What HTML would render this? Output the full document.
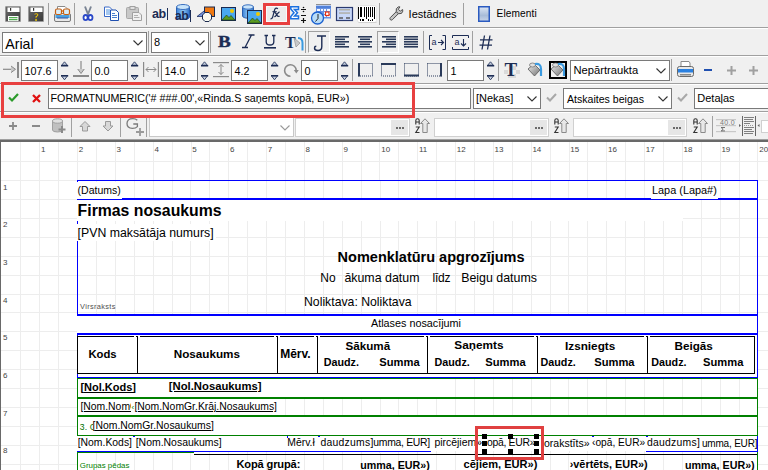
<!DOCTYPE html>
<html><head><meta charset="utf-8"><style>
html,body{margin:0;padding:0;width:768px;height:470px;overflow:hidden;background:#f0f0f0;position:relative}
.t{position:absolute;white-space:pre;line-height:1;}
.r{position:absolute;}
svg.r{overflow:visible}
</style></head><body>
<div class="r" style="left:0px;top:27px;width:768px;height:1px;background:#a0a0a0"></div><div class="r" style="left:0px;top:28px;width:768px;height:1px;background:#fff"></div><div class="r" style="left:0px;top:55px;width:768px;height:1px;background:#a0a0a0"></div><div class="r" style="left:0px;top:56px;width:768px;height:1px;background:#fff"></div><div class="r" style="left:0px;top:83px;width:768px;height:1px;background:#a0a0a0"></div><div class="r" style="left:0px;top:84px;width:768px;height:1px;background:#fff"></div><div class="r" style="left:0px;top:111px;width:768px;height:1px;background:#a0a0a0"></div><div class="r" style="left:0px;top:112px;width:768px;height:1px;background:#fff"></div><div class="r" style="left:0px;top:139px;width:768px;height:1px;background:#a0a0a0"></div><svg class="r" style="left:5px;top:6px;" width="16" height="16" viewBox="0 0 16 16"><defs><linearGradient id="fl" x1="0" y1="0" x2="1" y2="1"><stop offset="0" stop-color="#6a6a6a"/><stop offset="1" stop-color="#3a3a3a"/></linearGradient></defs><rect x="0.5" y="0.5" width="15" height="15" rx="0.5" fill="url(#fl)" stroke="#9a9a9a"/><rect x="2.5" y="1.5" width="12" height="4.5" fill="#fff"/><rect x="5" y="2" width="1.2" height="2.8" fill="#333"/><rect x="3" y="10" width="10.5" height="5" fill="#fff"/><rect x="4" y="11.2" width="8.5" height="1" fill="#2a9a2a"/><rect x="4" y="13.2" width="8.5" height="1" fill="#2a9a2a"/></svg><svg class="r" style="left:28px;top:6px;" width="16" height="16" viewBox="0 0 16 16"><rect x="0.5" y="0.5" width="15" height="15" rx="0.5" fill="url(#fl)" stroke="#9a9a9a"/><rect x="2.5" y="1.5" width="12" height="4.5" fill="#fff"/><rect x="5" y="2" width="1.2" height="2.8" fill="#333"/><path d="M6 8.8 Q6 7 8.2 7 Q10.5 7 10.5 8.8 Q10.5 10.2 8.8 11 L8.8 12.3 L7.3 12.3 L7.3 10.2 Q9 9.6 9 8.9 Q9 8.3 8.2 8.3 Q7.4 8.3 7.4 9 Z" fill="#f5d000" stroke="#2a2a60" stroke-width="0.4"/><rect x="7.2" y="13.2" width="1.7" height="1.6" fill="#f5d000"/></svg><div class="r" style="left:48px;top:3px;width:1px;height:22px;background:#a0a0a0"></div><svg class="r" style="left:54px;top:6px;" width="17" height="16" viewBox="0 0 17 16"><path d="M3.5 0.5 H11 L13 2.5 V8 H3.5 Z" fill="#fff" stroke="#8a8a8a"/><rect x="0.5" y="7.5" width="16" height="8" rx="1.5" fill="#e8e8e8" stroke="#7a7a7a"/><rect x="1.5" y="9" width="14" height="3" fill="#4aa0e0"/><rect x="3" y="11.5" width="11" height="1" fill="#3050a0"/><rect x="1.5" y="3" width="6" height="5.5" rx="1.5" fill="#d8ecf8" stroke="#c86010" stroke-width="1.2"/><rect x="9.5" y="3" width="6" height="5.5" rx="1.5" fill="#d8ecf8" stroke="#c86010" stroke-width="1.2"/><path d="M7.5 5 H9.5" stroke="#c86010" stroke-width="1.2"/></svg><div class="r" style="left:74px;top:3px;width:1px;height:22px;background:#a0a0a0"></div><svg class="r" style="left:83px;top:6px;" width="10" height="15" viewBox="0 0 10 15"><path d="M2 0.5 L5.3 9 M8 0.5 L4.7 9" stroke="#7a8494" stroke-width="1.9" fill="none"/><ellipse cx="2.6" cy="11.6" rx="2.1" ry="2.6" fill="#fff" stroke="#2a48c8" stroke-width="1.8"/><ellipse cx="7.4" cy="11.6" rx="2.1" ry="2.6" fill="#fff" stroke="#2a48c8" stroke-width="1.8"/></svg><svg class="r" style="left:103px;top:6px;" width="17" height="15" viewBox="0 0 17 15"><path d="M1.5 1 H6.5 L9 3.5 V10.5 H1.5 Z" fill="#fff" stroke="#3a6ac8"/><path d="M3 4 H7 M3 6 H7.5 M3 8 H7.5" stroke="#4a90e0"/><path d="M7.5 4 H13 L15.5 6.5 V14.5 H7.5 Z" fill="#fff" stroke="#2050b0"/><path d="M9 7.5 H12 M9 9.5 H14 M9 11.5 H14" stroke="#4a80d0"/></svg><svg class="r" style="left:126px;top:6px;" width="17" height="15" viewBox="0 0 17 15"><rect x="0.5" y="1.5" width="12" height="11" rx="1" fill="#c8c8c8" stroke="#a8a8a8"/><rect x="4" y="0.5" width="5" height="3" fill="#e0e0e0" stroke="#a0a0a0"/><path d="M6.5 6.5 H13 L15.5 9 V14.5 H6.5 Z" fill="#f0f0f0" stroke="#a0a0a0"/><path d="M8 9.5 H12 M8 11.5 H13.5" stroke="#b0b0b0"/></svg><div class="r" style="left:146px;top:3px;width:1px;height:22px;background:#a0a0a0"></div><div class="t" style="left:152.00px;top:8.02px;font-size:12.5px;font-weight:700;color:#1c2c54;font-family:'Liberation Sans',sans-serif;letter-spacing:-0.5px">ab</div><div class="r" style="left:167px;top:8px;width:1px;height:12px;background:#1c2c54"></div><svg class="r" style="left:176px;top:4px;" width="14" height="16" viewBox="0 0 14 16"><defs><linearGradient id="cyl" x1="0" y1="0" x2="1" y2="0"><stop offset="0" stop-color="#3a80d8"/><stop offset="0.5" stop-color="#90c8f4"/><stop offset="1" stop-color="#3070c8"/></linearGradient></defs><path d="M0.5 3 V13 A6.5 2.5 0 0 0 13.5 13 V3 Z" fill="url(#cyl)" stroke="#2a60b0"/><ellipse cx="7" cy="3" rx="6.5" ry="2.5" fill="#c8e4fa" stroke="#3a70c0"/></svg><div class="t" style="left:174.80px;top:10.42px;font-size:12.5px;font-weight:700;color:#1c2c54;font-family:'Liberation Sans',sans-serif;letter-spacing:-0.5px">ab</div><div class="r" style="left:190px;top:10px;width:1px;height:12px;background:#1c2c54"></div><svg class="r" style="left:196px;top:6px;" width="20" height="16" viewBox="0 0 20 16"><path d="M1 10.5 L10 10.5 L10 3.5 Z" fill="#7898e0" stroke="#203060" stroke-width="0.8"/><rect x="8.5" y="1" width="10" height="9.5" fill="#f07810" stroke="#1a2a50" stroke-width="1"/><path d="M9 6.5 H13 L15.5 9 V13 L13 15.5 H9 L6.5 13 V9 Z" fill="#fafaf0" stroke="#1a2a50" stroke-width="1"/></svg><svg class="r" style="left:221px;top:7px;" width="15" height="14" viewBox="0 0 15 14"><rect x="0.5" y="0.5" width="14" height="13" fill="#4aa8f0" stroke="#1a2a50"/><circle cx="11" cy="4" r="2" fill="#f0c800"/><path d="M1 13 L5.5 8 L8 10.5 L10 8.5 L14 13 Z" fill="#5a9a20" stroke="#1a3a10" stroke-width="0.6"/></svg><svg class="r" style="left:242px;top:4px;" width="12" height="15" viewBox="0 0 12 15"><path d="M0.5 3 V12 A5.5 2.2 0 0 0 11.5 12 V3 Z" fill="url(#cyl)" stroke="#2a60b0"/><ellipse cx="6" cy="3" rx="5.5" ry="2.2" fill="#c8e4fa" stroke="#3a70c0"/></svg><svg class="r" style="left:247px;top:10px;" width="15" height="14" viewBox="0 0 15 14"><rect x="0.5" y="0.5" width="14" height="13" fill="#4aa8f0" stroke="#1a2a50"/><circle cx="11" cy="4" r="2" fill="#f0c800"/><path d="M1 13 L5.5 8 L8 10.5 L10 8.5 L14 13 Z" fill="#5a9a20" stroke="#1a3a10" stroke-width="0.6"/></svg><div class="r" style="left:263px;top:3px;width:27px;height:22px;border:3px solid #e84040;box-sizing:border-box"></div><div class="r" style="left:266px;top:6px;width:21px;height:16px;border:1px solid #fafafa;box-sizing:border-box;background:#ececec"></div><svg class="r" style="left:268px;top:7px;" width="13" height="13" viewBox="0 0 13 13"><path d="M9.8 1.9 Q8.8 0.7 7.6 1.3 Q6.8 1.8 6.4 3.6 L4.6 10.3 Q4.1 11.9 2.4 12" fill="none" stroke="#1c2c54" stroke-width="1.25"/><path d="M4.4 4.7 H8.8" stroke="#1c2c54" stroke-width="1"/><path d="M6.2 5.5 Q6.9 5.1 7.5 5.9 L9.4 8.9 Q9.9 9.7 11.6 9.3 M11.6 5.2 Q10.9 5.1 10.2 5.9 L7.8 8.9 Q7.2 9.7 6.3 9.5" fill="none" stroke="#1c2c54" stroke-width="1.25"/></svg><svg class="r" style="left:290px;top:6px;" width="18" height="17" viewBox="0 0 18 17"><path d="M0.8 0.8 H8.5 V3.5 H4.5 L7.5 6.8 L4.5 10 H8.5 V12.8 H0.8 V10.5 L4 6.8 L0.8 3 Z" fill="#fff" stroke="#1a70e0" stroke-width="1.5"/><path d="M11 3.5 H16 M11 9.5 H16 M13.5 12 V17 M11 14.5 H16" stroke="#111" stroke-width="1.2"/><circle cx="13.5" cy="1.5" r="0.8" fill="#111"/><circle cx="13.5" cy="5.5" r="0.8" fill="#111"/></svg><svg class="r" style="left:311px;top:3px;" width="21" height="22" viewBox="0 0 21 22"><rect x="5" y="1" width="15" height="2" fill="#fff"/><path d="M5.5 1.5 H20" stroke="#222" stroke-dasharray="1,1" stroke-width="1"/><rect x="5" y="2.5" width="15" height="13" fill="#6a94e4"/><rect x="5" y="3" width="15" height="2" fill="#5080d8"/><g fill="#f4f8ff"><rect x="6" y="6" width="3" height="2"/><rect x="10" y="6" width="2" height="2"/><rect x="13" y="6" width="2" height="2"/><rect x="16" y="6" width="3" height="2"/><rect x="13" y="9" width="2" height="2"/><rect x="16" y="9" width="3" height="2"/><rect x="13" y="12" width="2" height="2"/><rect x="16" y="12" width="3" height="2"/></g><rect x="14.5" y="9" width="3.5" height="3.5" fill="#fff" stroke="#e83010" stroke-width="1.2"/><circle cx="6.5" cy="15" r="6" fill="#b8dcf8" stroke="#1a60d0" stroke-width="1.3"/><path d="M7 11 V15.5 L4.5 18.5" stroke="#111" stroke-width="0.9" fill="none"/></svg><svg class="r" style="left:336px;top:7px;" width="17" height="14" viewBox="0 0 17 14"><rect x="0.5" y="0.5" width="16" height="13" fill="#c8d8f8" stroke="#2a3a70" stroke-width="1.2"/><rect x="3" y="2" width="11" height="1.5" fill="#b0b0a8"/><rect x="3" y="5.3" width="11" height="1.5" fill="#b0b0a8"/><rect x="3" y="10.3" width="4" height="1.4" fill="#505050"/><rect x="10" y="10.3" width="4" height="1.4" fill="#505050"/></svg><svg class="r" style="left:357px;top:5px;" width="20" height="18" viewBox="0 0 20 18"><rect x="0.5" y="0.5" width="19" height="17" rx="2" fill="#fff" stroke="#e4e4e4"/><rect x="1.5" y="17" width="18" height="1" fill="#d0d0d0"/><g fill="#000"><rect x="1" y="2" width="1" height="12"/><rect x="3" y="2" width="2" height="10"/><rect x="7" y="2" width="1" height="10"/><rect x="9" y="2" width="1" height="12"/><rect x="11" y="2" width="1" height="10"/><rect x="13" y="2" width="1" height="10"/><rect x="15" y="2" width="1" height="10"/><rect x="17" y="2" width="1" height="12"/><rect x="3" y="14" width="1" height="2"/><rect x="5" y="14" width="2" height="2"/><rect x="11" y="14" width="1" height="2"/><rect x="13" y="15" width="1" height="1"/><rect x="15" y="14" width="1" height="2"/></g></svg><div class="r" style="left:379px;top:3px;width:1px;height:22px;background:#a0a0a0"></div><svg class="r" style="left:389px;top:6px;" width="15" height="15" viewBox="0 0 15 15"><path d="M1.3 11.6 L7.3 5.6 L9.4 7.7 L3.4 13.7 Q2.3 14.6 1.3 13.7 Q0.4 12.7 1.3 11.6 Z" fill="#c4c4c4" stroke="#505050" stroke-width="1"/><path d="M7.3 5.6 Q6.4 2.2 9.2 0.9 L11 0.9 L9.3 3.2 L11.3 5.2 L13.6 3.5 L13.8 5.2 Q13.3 8.4 9.4 7.7 Z" fill="#c4c4c4" stroke="#505050" stroke-width="1"/></svg><div class="t" style="left:408.60px;top:8.53px;font-size:11.07px;font-weight:400;color:#000;font-family:'Liberation Sans',sans-serif;">Iestādnes</div><div class="r" style="left:463px;top:3px;width:1px;height:22px;background:#a0a0a0"></div><svg class="r" style="left:478px;top:6px;" width="12" height="16" viewBox="0 0 12 16"><defs><linearGradient id="el" x1="0" y1="0" x2="0" y2="1"><stop offset="0" stop-color="#dce6f4"/><stop offset="0.6" stop-color="#a8bcd8"/><stop offset="1" stop-color="#c8d4e8"/></linearGradient></defs><rect x="0.75" y="0.75" width="10.5" height="14.5" fill="url(#el)" stroke="#2a5ac0" stroke-width="1.5"/></svg><div class="t" style="left:496.60px;top:9.32px;font-size:10.13px;font-weight:400;color:#000;font-family:'Liberation Sans',sans-serif;letter-spacing:0.1px">Elementi</div><div class="r" style="left:2px;top:32px;width:145px;height:21px;background:#fff;border:1px solid #7a7a7a;box-sizing:border-box"></div><div class="t" style="left:5.20px;top:36.58px;font-size:14.2px;font-weight:400;color:#000;font-family:'Liberation Sans',sans-serif;">Arial</div><svg class="r" style="left:133px;top:40px;" width="10" height="6" viewBox="0 0 10 6"><path d="M0.5 0.5 L5 5 L9.5 0.5" fill="none" stroke="#333" stroke-width="1.1"/></svg><div class="r" style="left:148px;top:31px;width:1px;height:22px;background:#a0a0a0"></div><div class="r" style="left:151px;top:32px;width:58px;height:21px;background:#fff;border:1px solid #7a7a7a;box-sizing:border-box"></div><div class="t" style="left:154.00px;top:37.09px;font-size:11px;font-weight:400;color:#000;font-family:'Liberation Sans',sans-serif;">8</div><svg class="r" style="left:195px;top:40px;" width="10" height="6" viewBox="0 0 10 6"><path d="M0.5 0.5 L5 5 L9.5 0.5" fill="none" stroke="#333" stroke-width="1.1"/></svg><div class="r" style="left:210px;top:31px;width:1px;height:22px;background:#a0a0a0"></div><div class="t" style="left:217.50px;top:33.41px;font-size:17px;font-weight:700;color:#1c2c54;font-family:'Liberation Serif',sans-serif;transform:scaleX(1.12);transform-origin:0 0;-webkit-text-stroke:0.4px #1c2c54">B</div><svg class="r" style="left:241px;top:34px;" width="15" height="15" viewBox="0 0 15 15"><path d="M7.5 1 H13.5 M1 13.5 H7 M10.5 1 L4 13.5" fill="none" stroke="#1c2c54" stroke-width="1.3"/></svg><svg class="r" style="left:263px;top:35px;" width="14" height="14" viewBox="0 0 14 14"><path d="M1.5 0.5 H5 M9 0.5 H12.5 M3.2 0.5 V7 Q3.2 10 7 10 Q10.8 10 10.8 7 V0.5" fill="none" stroke="#1c2c54" stroke-width="1.3"/><rect x="1" y="12" width="12" height="1.6" fill="#1c2c54"/></svg><div class="t" style="left:285.00px;top:34.95px;font-size:16px;font-weight:700;color:#1c2c54;font-family:'Liberation Serif',sans-serif;">T</div><svg class="r" style="left:293px;top:37px;" width="11" height="14" viewBox="0 0 11 14"><path d="M1 1 L7 6 L3 10 Z" fill="#c8c8c8" stroke="#888" stroke-width="0.6"/><path d="M5 1 Q9.5 1 9.5 6 V13.5" fill="none" stroke="#3a9ae0" stroke-width="2"/></svg><div class="r" style="left:305px;top:31px;width:1px;height:22px;background:#a0a0a0"></div><div class="r" style="left:308px;top:31px;width:22px;height:22px;border-top:1px solid #a0a0a0;border-left:1px solid #a0a0a0;border-right:1px solid #fff;border-bottom:1px solid #fff;box-sizing:border-box;background:#f0f0f0"></div><svg class="r" style="left:313px;top:35px;" width="14" height="17" viewBox="0 0 14 17"><path d="M4 1 H13 M8.8 1 V11.5 Q8.8 15.5 5 15.5 Q1.5 15.5 1.5 13 Q1.5 11.3 3.3 11.3" fill="none" stroke="#1c2c54" stroke-width="1.4"/></svg><svg class="r" style="left:335px;top:36px;" width="14" height="12" viewBox="0 0 14 12"><rect x="0" y="0" width="14" height="1.6" fill="#2a3a5a"/><rect x="0" y="2.5" width="10" height="1.6" fill="#2a3a5a"/><rect x="0" y="5" width="14" height="1.6" fill="#2a3a5a"/><rect x="0" y="7.5" width="10" height="1.6" fill="#2a3a5a"/><rect x="0" y="10" width="14" height="1.6" fill="#2a3a5a"/></svg><svg class="r" style="left:358px;top:36px;" width="14" height="12" viewBox="0 0 14 12"><rect x="0.0" y="0" width="14" height="1.6" fill="#2a3a5a"/><rect x="2.0" y="2.5" width="10" height="1.6" fill="#2a3a5a"/><rect x="0.0" y="5" width="14" height="1.6" fill="#2a3a5a"/><rect x="2.0" y="7.5" width="10" height="1.6" fill="#2a3a5a"/><rect x="0.0" y="10" width="14" height="1.6" fill="#2a3a5a"/></svg><div class="r" style="left:377px;top:31px;width:22px;height:22px;border-top:1px solid #a0a0a0;border-left:1px solid #a0a0a0;border-right:1px solid #fff;border-bottom:1px solid #fff;box-sizing:border-box;background:#f0f0f0"></div><svg class="r" style="left:382px;top:36px;" width="14" height="12" viewBox="0 0 14 12"><rect x="0" y="0" width="14" height="1.6" fill="#2a3a5a"/><rect x="4" y="2.5" width="10" height="1.6" fill="#2a3a5a"/><rect x="0" y="5" width="14" height="1.6" fill="#2a3a5a"/><rect x="4" y="7.5" width="10" height="1.6" fill="#2a3a5a"/><rect x="0" y="10" width="14" height="1.6" fill="#2a3a5a"/></svg><svg class="r" style="left:404px;top:36px;" width="14" height="12" viewBox="0 0 14 12"><rect x="0" y="0" width="14" height="1.6" fill="#2a3a5a"/><rect x="0" y="2.5" width="14" height="1.6" fill="#2a3a5a"/><rect x="0" y="5" width="14" height="1.6" fill="#2a3a5a"/><rect x="0" y="7.5" width="14" height="1.6" fill="#2a3a5a"/><rect x="0" y="10" width="14" height="1.6" fill="#2a3a5a"/></svg><div class="r" style="left:423px;top:31px;width:1px;height:22px;background:#a0a0a0"></div><svg class="r" style="left:429px;top:35px;" width="17" height="15" viewBox="0 0 17 15"><path d="M3 0.5 H0.5 V14.5 H3 M13.5 0.5 H16.5 V14.5 H13.5" fill="none" stroke="#1c2c54" stroke-width="1"/><path d="M9 7.5 H14 M12 5 L14.5 7.5 L12 10" fill="none" stroke="#1c2c54" stroke-width="1.1"/></svg><div class="t" style="left:431.50px;top:37.88px;font-size:9px;font-weight:400;color:#1c2c54;font-family:'Liberation Sans',sans-serif;">a</div><svg class="r" style="left:452px;top:35px;" width="17" height="15" viewBox="0 0 17 15"><path d="M0.5 3 V0.5 H16.5 V3 M0.5 12 V14.5 H16.5 V12" fill="none" stroke="#1c2c54" stroke-width="1"/><path d="M11.5 4 V11 M9 8.5 L11.5 11 L14 8.5" fill="none" stroke="#1c2c54" stroke-width="1.1"/></svg><div class="t" style="left:454.50px;top:37.88px;font-size:9px;font-weight:400;color:#1c2c54;font-family:'Liberation Sans',sans-serif;">a</div><div class="r" style="left:472px;top:31px;width:1px;height:22px;background:#a0a0a0"></div><svg class="r" style="left:479px;top:35px;" width="14" height="15" viewBox="0 0 14 15"><path d="M5.5 0.5 L3 14.5 M11 0.5 L8.5 14.5 M1 4.8 H13.5 M0.5 10.2 H13" fill="none" stroke="#1c2c54" stroke-width="1.3"/></svg><svg class="r" style="left:3px;top:61px;" width="17" height="17" viewBox="0 0 17 17"><path d="M0 8.3 H11" stroke="#8a8a8a" stroke-width="1.2"/><path d="M8 5 L12.5 8.3 L8 11.6" fill="#c8c8c8" stroke="#8a8a8a" stroke-width="1"/><rect x="14" y="1" width="2" height="16" fill="#8a8a8a"/></svg><div class="r" style="left:21px;top:60px;width:37px;height:21px;background:#fff;border:1px solid #7a7a7a;box-sizing:border-box"></div><div class="t" style="left:24.50px;top:65.56px;font-size:10.8px;font-weight:400;color:#000;font-family:'Liberation Sans',sans-serif;">107.6</div><svg class="r" style="left:61px;top:61px;" width="8" height="6" viewBox="0 0 8 6"><path d="M3.5 0.8 L6.3 4.2 H0.7 Z" fill="#c8d0e0" stroke="#2a3a60" stroke-width="0.9"/><rect x="0" y="4" width="7.2" height="1.5" fill="#1c2c54"/></svg><svg class="r" style="left:61px;top:75px;" width="8" height="6" viewBox="0 0 8 6"><rect x="0" y="0" width="7.2" height="1.5" fill="#1c2c54"/><path d="M0.7 1.2 H6.3 L3.5 4.8 Z" fill="#c8d0e0" stroke="#2a3a60" stroke-width="0.9"/></svg><svg class="r" style="left:73px;top:61px;" width="16" height="17" viewBox="0 0 16 17"><path d="M8 0 V11" stroke="#8a8a8a" stroke-width="1.2"/><path d="M4.7 8 L8 12.5 L11.3 8" fill="#c8c8c8" stroke="#8a8a8a" stroke-width="1"/><rect x="0" y="14" width="16" height="2" fill="#8a8a8a"/></svg><div class="r" style="left:91px;top:60px;width:37px;height:21px;background:#fff;border:1px solid #7a7a7a;box-sizing:border-box"></div><div class="t" style="left:94.50px;top:65.56px;font-size:10.8px;font-weight:400;color:#000;font-family:'Liberation Sans',sans-serif;">0.0</div><svg class="r" style="left:131px;top:61px;" width="8" height="6" viewBox="0 0 8 6"><path d="M3.5 0.8 L6.3 4.2 H0.7 Z" fill="#c8d0e0" stroke="#2a3a60" stroke-width="0.9"/><rect x="0" y="4" width="7.2" height="1.5" fill="#1c2c54"/></svg><svg class="r" style="left:131px;top:75px;" width="8" height="6" viewBox="0 0 8 6"><rect x="0" y="0" width="7.2" height="1.5" fill="#1c2c54"/><path d="M0.7 1.2 H6.3 L3.5 4.8 Z" fill="#c8d0e0" stroke="#2a3a60" stroke-width="0.9"/></svg><svg class="r" style="left:143px;top:61px;" width="16" height="17" viewBox="0 0 16 17"><rect x="0" y="1" width="1.2" height="15" fill="#8a8a8a"/><rect x="14.8" y="1" width="1.2" height="15" fill="#8a8a8a"/><path d="M3 8.5 H13 M5.5 6 L3 8.5 L5.5 11 M10.5 6 L13 8.5 L10.5 11" fill="none" stroke="#8a8a8a" stroke-width="1"/></svg><div class="r" style="left:161px;top:60px;width:37px;height:21px;background:#fff;border:1px solid #7a7a7a;box-sizing:border-box"></div><div class="t" style="left:164.50px;top:65.56px;font-size:10.8px;font-weight:400;color:#000;font-family:'Liberation Sans',sans-serif;">14.0</div><svg class="r" style="left:201px;top:61px;" width="8" height="6" viewBox="0 0 8 6"><path d="M3.5 0.8 L6.3 4.2 H0.7 Z" fill="#c8d0e0" stroke="#2a3a60" stroke-width="0.9"/><rect x="0" y="4" width="7.2" height="1.5" fill="#1c2c54"/></svg><svg class="r" style="left:201px;top:75px;" width="8" height="6" viewBox="0 0 8 6"><rect x="0" y="0" width="7.2" height="1.5" fill="#1c2c54"/><path d="M0.7 1.2 H6.3 L3.5 4.8 Z" fill="#c8d0e0" stroke="#2a3a60" stroke-width="0.9"/></svg><svg class="r" style="left:213px;top:61px;" width="16" height="17" viewBox="0 0 16 17"><rect x="0" y="1" width="16" height="1.2" fill="#8a8a8a"/><rect x="0" y="15" width="16" height="1.2" fill="#8a8a8a"/><path d="M8 3.5 V13.5 M5.5 6 L8 3.5 L10.5 6 M5.5 11 L8 13.5 L10.5 11" fill="none" stroke="#8a8a8a" stroke-width="1"/></svg><div class="r" style="left:231px;top:60px;width:37px;height:21px;background:#fff;border:1px solid #7a7a7a;box-sizing:border-box"></div><div class="t" style="left:234.50px;top:65.56px;font-size:10.8px;font-weight:400;color:#000;font-family:'Liberation Sans',sans-serif;">4.2</div><svg class="r" style="left:271px;top:61px;" width="8" height="6" viewBox="0 0 8 6"><path d="M3.5 0.8 L6.3 4.2 H0.7 Z" fill="#c8d0e0" stroke="#2a3a60" stroke-width="0.9"/><rect x="0" y="4" width="7.2" height="1.5" fill="#1c2c54"/></svg><svg class="r" style="left:271px;top:75px;" width="8" height="6" viewBox="0 0 8 6"><rect x="0" y="0" width="7.2" height="1.5" fill="#1c2c54"/><path d="M0.7 1.2 H6.3 L3.5 4.8 Z" fill="#c8d0e0" stroke="#2a3a60" stroke-width="0.9"/></svg><svg class="r" style="left:283px;top:62px;" width="16" height="16" viewBox="0 0 16 16"><path d="M7.5 14.3 A5.8 5.8 0 1 1 13.2 8.3" fill="none" stroke="#8a8a8a" stroke-width="1.6"/><path d="M10.8 8 H15.8 L13.3 11.5 Z" fill="#8a8a8a"/></svg><div class="r" style="left:301px;top:60px;width:37px;height:21px;background:#fff;border:1px solid #7a7a7a;box-sizing:border-box"></div><div class="t" style="left:304.50px;top:65.56px;font-size:10.8px;font-weight:400;color:#000;font-family:'Liberation Sans',sans-serif;">0</div><svg class="r" style="left:341px;top:61px;" width="8" height="6" viewBox="0 0 8 6"><path d="M3.5 0.8 L6.3 4.2 H0.7 Z" fill="#c8d0e0" stroke="#2a3a60" stroke-width="0.9"/><rect x="0" y="4" width="7.2" height="1.5" fill="#1c2c54"/></svg><svg class="r" style="left:341px;top:75px;" width="8" height="6" viewBox="0 0 8 6"><rect x="0" y="0" width="7.2" height="1.5" fill="#1c2c54"/><path d="M0.7 1.2 H6.3 L3.5 4.8 Z" fill="#c8d0e0" stroke="#2a3a60" stroke-width="0.9"/></svg><div class="r" style="left:352px;top:59px;width:1px;height:22px;background:#a0a0a0"></div><svg class="r" style="left:358px;top:63px;" width="15" height="14" viewBox="0 0 15 14"><rect x="0.5" y="0.5" width="14" height="12.5" fill="none" stroke="#2a3a5a" stroke-width="1" stroke-dasharray="1,1"/><rect x="0" y="0" width="2" height="13.5" fill="#2a3a5a"/></svg><svg class="r" style="left:381px;top:63px;" width="15" height="14" viewBox="0 0 15 14"><rect x="0.5" y="0.5" width="14" height="12.5" fill="none" stroke="#2a3a5a" stroke-width="1" stroke-dasharray="1,1"/><rect x="0" y="0" width="15" height="2" fill="#2a3a5a"/></svg><svg class="r" style="left:404px;top:63px;" width="15" height="14" viewBox="0 0 15 14"><rect x="0.5" y="0.5" width="14" height="12.5" fill="none" stroke="#2a3a5a" stroke-width="1" stroke-dasharray="1,1"/><rect x="0" y="11.5" width="15" height="2" fill="#2a3a5a"/></svg><svg class="r" style="left:427px;top:63px;" width="15" height="14" viewBox="0 0 15 14"><rect x="0.5" y="0.5" width="14" height="12.5" fill="none" stroke="#2a3a5a" stroke-width="1" stroke-dasharray="1,1"/><rect x="13" y="0" width="2" height="13.5" fill="#2a3a5a"/></svg><div class="r" style="left:447px;top:60px;width:37px;height:21px;background:#fff;border:1px solid #7a7a7a;box-sizing:border-box"></div><div class="t" style="left:450.50px;top:65.56px;font-size:10.8px;font-weight:400;color:#000;font-family:'Liberation Sans',sans-serif;">1</div><svg class="r" style="left:487px;top:61px;" width="8" height="6" viewBox="0 0 8 6"><path d="M3.5 0.8 L6.3 4.2 H0.7 Z" fill="#c8d0e0" stroke="#2a3a60" stroke-width="0.9"/><rect x="0" y="4" width="7.2" height="1.5" fill="#1c2c54"/></svg><svg class="r" style="left:487px;top:75px;" width="8" height="6" viewBox="0 0 8 6"><rect x="0" y="0" width="7.2" height="1.5" fill="#1c2c54"/><path d="M0.7 1.2 H6.3 L3.5 4.8 Z" fill="#c8d0e0" stroke="#2a3a60" stroke-width="0.9"/></svg><div class="r" style="left:498px;top:59px;width:1px;height:22px;background:#a0a0a0"></div><svg class="r" style="left:504px;top:62px;" width="16" height="16" viewBox="0 0 16 16"><g fill="#dadada"><rect x="0" y="8" width="4" height="4"/><rect x="4" y="12" width="4" height="4"/><rect x="12" y="8" width="4" height="4"/><rect x="8" y="12" width="4" height="4"/><rect x="8" y="4" width="4" height="4"/></g></svg><div class="t" style="left:504.50px;top:60.41px;font-size:19px;font-weight:700;color:#1c2c54;font-family:'Liberation Serif',sans-serif;">T</div><svg class="r" style="left:527px;top:61px;" width="17" height="17" viewBox="0 0 17 17"><defs><linearGradient id="bk527" x1="0" y1="0" x2="1" y2="1"><stop offset="0" stop-color="#f0f0f0"/><stop offset="1" stop-color="#707070"/></linearGradient></defs><path d="M1 8 L7 3 L13 9 L7.5 15 Z" fill="url(#bk527)" stroke="#555" stroke-width="0.8"/><ellipse cx="5.5" cy="4" rx="3" ry="2" fill="#e0e0e0" stroke="#666" stroke-width="0.7"/><path d="M8 3 Q14 2 14 8 V15" fill="none" stroke="#3a9ae0" stroke-width="2.2"/></svg><div class="r" style="left:549px;top:61px;width:18px;height:18px;border:2px solid #000;box-sizing:border-box"></div><svg class="r" style="left:550px;top:61px;" width="17" height="17" viewBox="0 0 17 17"><defs><linearGradient id="bk550" x1="0" y1="0" x2="1" y2="1"><stop offset="0" stop-color="#f0f0f0"/><stop offset="1" stop-color="#707070"/></linearGradient></defs><path d="M1 8 L7 3 L13 9 L7.5 15 Z" fill="url(#bk550)" stroke="#555" stroke-width="0.8"/><ellipse cx="5.5" cy="4" rx="3" ry="2" fill="#e0e0e0" stroke="#666" stroke-width="0.7"/><path d="M8 3 Q14 2 14 8 V15" fill="none" stroke="#3a9ae0" stroke-width="2.2"/></svg><div class="r" style="left:570px;top:60px;width:100px;height:21px;background:#fff;border:1px solid #7a7a7a;box-sizing:border-box"></div><div class="t" style="left:573.50px;top:65.32px;font-size:11.2px;font-weight:400;color:#000;font-family:'Liberation Sans',sans-serif;">Nepārtraukta</div><svg class="r" style="left:656px;top:68px;" width="10" height="6" viewBox="0 0 10 6"><path d="M0.5 0.5 L5 5 L9.5 0.5" fill="none" stroke="#333" stroke-width="1.1"/></svg><div class="r" style="left:671px;top:59px;width:1px;height:22px;background:#a0a0a0"></div><svg class="r" style="left:677px;top:61px;" width="17" height="17" viewBox="0 0 17 17"><path d="M4 0.5 H12 L13 2 V6 H4 Z" fill="#fff" stroke="#8a8a8a"/><rect x="0.5" y="5.5" width="16" height="10" rx="2" fill="#e8e8e8" stroke="#6a6a6a"/><rect x="1" y="8" width="15" height="3.5" fill="#2a80e0"/><rect x="3" y="13" width="11" height="1.5" fill="#8a8a8a"/></svg><div class="r" style="left:704px;top:69px;width:8px;height:2px;background:#2050b0"></div><svg class="r" style="left:727px;top:66px;" width="9" height="9" viewBox="0 0 9 9"><path d="M4.5 0 V9 M0 4.5 H9" stroke="#a0a0a0" stroke-width="2"/></svg><svg class="r" style="left:749px;top:66px;" width="9" height="9" viewBox="0 0 9 9"><path d="M4.5 0 V9 M0 4.5 H9" stroke="#a0a0a0" stroke-width="2"/></svg><svg class="r" style="left:8px;top:93px;" width="11" height="9" viewBox="0 0 11 9"><path d="M1 4.5 L4 7.5 L10 1" fill="none" stroke="#2a9a2a" stroke-width="2.2"/></svg><svg class="r" style="left:32px;top:94px;" width="9" height="9" viewBox="0 0 9 9"><path d="M1 1 L8 8 M8 1 L1 8" fill="none" stroke="#e01010" stroke-width="2.3"/></svg><div class="r" style="left:48px;top:88px;width:423px;height:21px;background:#fff;border:1px solid #7a7a7a;box-sizing:border-box"></div><div class="t" style="left:50.50px;top:93.21px;font-size:10.73px;font-weight:400;color:#000;font-family:'Liberation Sans',sans-serif;">FORMATNUMERIC('# ###.00',«Rinda.S saņemts kopā, EUR»)</div><div class="r" style="left:473px;top:88px;width:68px;height:21px;background:#fff;border:1px solid #7a7a7a;box-sizing:border-box"></div><div class="t" style="left:476.00px;top:93.19px;font-size:11px;font-weight:400;color:#000;font-family:'Liberation Sans',sans-serif;">[Nekas]</div><svg class="r" style="left:527px;top:96px;" width="10" height="6" viewBox="0 0 10 6"><path d="M0.5 0.5 L5 5 L9.5 0.5" fill="none" stroke="#333" stroke-width="1.1"/></svg><svg class="r" style="left:546px;top:93px;" width="11" height="9" viewBox="0 0 11 9"><path d="M1 4.5 L4 7.5 L10 1" fill="none" stroke="#a8a8a8" stroke-width="2"/></svg><div class="r" style="left:563px;top:88px;width:109px;height:21px;background:#fff;border:1px solid #7a7a7a;box-sizing:border-box"></div><div class="t" style="left:567.00px;top:93.55px;font-size:10.57px;font-weight:400;color:#000;font-family:'Liberation Sans',sans-serif;">Atskaites beigas</div><svg class="r" style="left:658px;top:96px;" width="10" height="6" viewBox="0 0 10 6"><path d="M0.5 0.5 L5 5 L9.5 0.5" fill="none" stroke="#333" stroke-width="1.1"/></svg><svg class="r" style="left:677px;top:93px;" width="11" height="9" viewBox="0 0 11 9"><path d="M1 4.5 L4 7.5 L10 1" fill="none" stroke="#a8a8a8" stroke-width="2"/></svg><div class="r" style="left:694px;top:88px;width:86px;height:21px;background:#fff;border:1px solid #7a7a7a;box-sizing:border-box"></div><div class="t" style="left:697.30px;top:93.19px;font-size:11px;font-weight:400;color:#000;font-family:'Liberation Sans',sans-serif;">Detaļas</div><svg class="r" style="left:9px;top:122px;" width="8" height="8" viewBox="0 0 8 8"><path d="M4 0 V8 M0 4 H8" stroke="#8a8a8a" stroke-width="1.8"/></svg><div class="r" style="left:32px;top:125px;width:8px;height:2px;background:#8a8a8a"></div><svg class="r" style="left:52px;top:118px;" width="15" height="16" viewBox="0 0 15 16"><path d="M0.5 3 V12 A5 2 0 0 0 10.5 12 V3 Z" fill="#c0c0c0" stroke="#a0a0a0"/><ellipse cx="5.5" cy="3" rx="5" ry="2.2" fill="#e0e0e0" stroke="#a0a0a0"/><path d="M10 8 V15 M6.5 11.5 H13.5" stroke="#8a8a8a" stroke-width="2"/></svg><div class="r" style="left:71px;top:118px;width:1px;height:19px;background:#a0a0a0"></div><svg class="r" style="left:80px;top:121px;" width="11" height="11" viewBox="0 0 11 11"><path d="M5 0.5 L10 5.5 H7.5 V10 H2.5 V5.5 H0 Z" fill="#d8d8d8" stroke="#9a9a9a" stroke-width="1"/></svg><svg class="r" style="left:103px;top:121px;" width="11" height="11" viewBox="0 0 11 11"><path d="M5 10 L10 5 H7.5 V0.5 H2.5 V5 H0 Z" fill="#d8d8d8" stroke="#9a9a9a" stroke-width="1"/></svg><div class="r" style="left:120px;top:118px;width:1px;height:19px;background:#a0a0a0"></div><svg class="r" style="left:126px;top:118px;" width="13" height="12" viewBox="0 0 13 12"><path d="M11.3 2.2 Q9.8 0.7 6.8 0.7 Q1 0.7 1 5.6 Q1 10.4 6.4 10.4 Q9.8 10.4 11.4 8.6 V6 H7.3" fill="none" stroke="#7a7a7a" stroke-width="1.3"/></svg><svg class="r" style="left:136px;top:128px;" width="8" height="8" viewBox="0 0 8 8"><path d="M4 0 V8 M0 4 H8" stroke="#9a9a9a" stroke-width="1.8"/></svg><div class="r" style="left:146px;top:118px;width:1px;height:19px;background:#a0a0a0"></div><div class="r" style="left:149px;top:117px;width:145px;height:20px;background:#fff;border:1px solid #c8c8c8;box-sizing:border-box"></div><svg class="r" style="left:280px;top:125px;" width="10" height="6" viewBox="0 0 10 6"><path d="M0.5 0.5 L5 5 L9.5 0.5" fill="none" stroke="#999" stroke-width="1.1"/></svg><div class="r" style="left:295px;top:118px;width:115px;height:19px;background:#fff;border:1px solid #d0d0d0;box-sizing:border-box"></div><div class="r" style="left:391px;top:120px;width:17px;height:15px;background:#e6e6e6"></div><div class="r" style="left:396px;top:127px;width:2px;height:2px;background:#6a6a6a"></div><div class="r" style="left:399px;top:127px;width:2px;height:2px;background:#6a6a6a"></div><div class="r" style="left:402px;top:127px;width:2px;height:2px;background:#6a6a6a"></div><svg class="r" style="left:415px;top:118px;" width="16" height="16" viewBox="0 0 16 16"><path d="M0.8 6.5 V2.5 Q0.8 0.8 2.5 0.8 Q4.2 0.8 4.2 2.5 V6.5 M0.8 4 H4.2 M0.8 9 H4.2 L0.8 14.5 H4.5" fill="none" stroke="#333" stroke-width="1.1"/><path d="M10 0.8 L14.5 5.5 H12.2 V14.5 H7.8 V5.5 H5.5 Z" fill="#e8e8e8" stroke="#8a8a8a" stroke-width="1"/></svg><div class="r" style="left:434px;top:118px;width:115px;height:19px;background:#fff;border:1px solid #d0d0d0;box-sizing:border-box"></div><div class="r" style="left:530px;top:120px;width:17px;height:15px;background:#e6e6e6"></div><div class="r" style="left:535px;top:127px;width:2px;height:2px;background:#6a6a6a"></div><div class="r" style="left:538px;top:127px;width:2px;height:2px;background:#6a6a6a"></div><div class="r" style="left:541px;top:127px;width:2px;height:2px;background:#6a6a6a"></div><svg class="r" style="left:554px;top:118px;" width="16" height="16" viewBox="0 0 16 16"><path d="M0.8 6.5 V2.5 Q0.8 0.8 2.5 0.8 Q4.2 0.8 4.2 2.5 V6.5 M0.8 4 H4.2 M0.8 9 H4.2 L0.8 14.5 H4.5" fill="none" stroke="#333" stroke-width="1.1"/><path d="M10 0.8 L14.5 5.5 H12.2 V14.5 H7.8 V5.5 H5.5 Z" fill="#e8e8e8" stroke="#8a8a8a" stroke-width="1"/></svg><div class="r" style="left:573px;top:118px;width:114px;height:19px;background:#fff;border:1px solid #d0d0d0;box-sizing:border-box"></div><div class="r" style="left:668px;top:120px;width:17px;height:15px;background:#e6e6e6"></div><div class="r" style="left:673px;top:127px;width:2px;height:2px;background:#6a6a6a"></div><div class="r" style="left:676px;top:127px;width:2px;height:2px;background:#6a6a6a"></div><div class="r" style="left:679px;top:127px;width:2px;height:2px;background:#6a6a6a"></div><svg class="r" style="left:693px;top:118px;" width="16" height="16" viewBox="0 0 16 16"><path d="M0.8 6.5 V2.5 Q0.8 0.8 2.5 0.8 Q4.2 0.8 4.2 2.5 V6.5 M0.8 4 H4.2 M0.8 9 H4.2 L0.8 14.5 H4.5" fill="none" stroke="#333" stroke-width="1.1"/><path d="M10 0.8 L14.5 5.5 H12.2 V14.5 H7.8 V5.5 H5.5 Z" fill="#e8e8e8" stroke="#8a8a8a" stroke-width="1"/></svg><div class="r" style="left:712px;top:116px;width:1px;height:21px;background:#a0a0a0"></div><svg class="r" style="left:716px;top:118px;" width="20" height="16" viewBox="0 0 20 16"><rect x="0" y="1" width="20" height="1.2" fill="#c8c8c8"/><rect x="0" y="7" width="20" height="1.2" fill="#c8c8c8"/><rect x="0" y="13" width="20" height="1.2" fill="#c8c8c8"/><path d="M5 9.5 H9 M5.3 9.8 L7.2 11.3 L5.3 12.8 M5 12.9 H9" fill="none" stroke="#555" stroke-width="0.8"/></svg><div class="t" style="left:720.00px;top:118.57px;font-size:7px;font-weight:400;color:#777;font-family:'Liberation Sans',sans-serif;letter-spacing:0.3px">40.0</div><svg class="r" style="left:739px;top:116px;" width="21" height="21" viewBox="0 0 21 21"><rect x="3" y="0" width="1" height="20" fill="#666"/><rect x="16" y="0" width="1" height="20" fill="#666"/><g fill="#808080"><rect x="5" y="1" width="10" height="1"/><rect x="5" y="3" width="9" height="1"/><rect x="5" y="5" width="10" height="1"/><rect x="5" y="7" width="6" height="1"/><rect x="5" y="11" width="10" height="1"/><rect x="5" y="13" width="8" height="1"/><rect x="5" y="15" width="10" height="1"/><rect x="5" y="17" width="9" height="1"/></g><g fill="#999"><rect x="5" y="9" width="1" height="1"/><rect x="7" y="9" width="1" height="1"/><rect x="9" y="9" width="1" height="1"/><rect x="11" y="9" width="1" height="1"/><rect x="13" y="9" width="1" height="1"/></g><path d="M0 8 L2 9.5 L0 11 Z M20.5 8 L18.5 9.5 L20.5 11 Z" fill="#666"/></svg><div class="r" style="left:761px;top:120px;width:19px;height:13px;background:#fff;border:1px solid #d0d0d0;box-sizing:border-box"></div><div class="r" style="left:1px;top:82px;width:414px;height:36px;border:3px solid #e84040;box-sizing:border-box"></div><div class="r" style="left:0px;top:140px;width:768px;height:2px;background:#696969"></div><div class="r" style="left:0px;top:142px;width:1px;height:328px;background:#696969"></div><div class="r" style="left:1px;top:142px;width:767px;height:328px;background:#fff"></div><svg class="r" style="left:1px;top:142px;" width="767" height="328" viewBox="0 0 767 328"><rect x="19" y="0" width="1" height="328" fill="#ededed"/><rect x="38" y="0" width="1" height="328" fill="#ededed"/><rect x="57" y="0" width="1" height="328" fill="#ededed"/><rect x="76" y="0" width="1" height="328" fill="#ededed"/><rect x="95" y="0" width="1" height="328" fill="#ededed"/><rect x="114" y="0" width="1" height="328" fill="#ededed"/><rect x="133" y="0" width="1" height="328" fill="#ededed"/><rect x="152" y="0" width="1" height="328" fill="#ededed"/><rect x="171" y="0" width="1" height="328" fill="#ededed"/><rect x="190" y="0" width="1" height="328" fill="#ededed"/><rect x="208" y="0" width="1" height="328" fill="#ededed"/><rect x="227" y="0" width="1" height="328" fill="#ededed"/><rect x="246" y="0" width="1" height="328" fill="#ededed"/><rect x="265" y="0" width="1" height="328" fill="#ededed"/><rect x="284" y="0" width="1" height="328" fill="#ededed"/><rect x="303" y="0" width="1" height="328" fill="#ededed"/><rect x="322" y="0" width="1" height="328" fill="#ededed"/><rect x="341" y="0" width="1" height="328" fill="#ededed"/><rect x="360" y="0" width="1" height="328" fill="#ededed"/><rect x="378" y="0" width="1" height="328" fill="#ededed"/><rect x="397" y="0" width="1" height="328" fill="#ededed"/><rect x="416" y="0" width="1" height="328" fill="#ededed"/><rect x="435" y="0" width="1" height="328" fill="#ededed"/><rect x="454" y="0" width="1" height="328" fill="#ededed"/><rect x="473" y="0" width="1" height="328" fill="#ededed"/><rect x="492" y="0" width="1" height="328" fill="#ededed"/><rect x="511" y="0" width="1" height="328" fill="#ededed"/><rect x="530" y="0" width="1" height="328" fill="#ededed"/><rect x="549" y="0" width="1" height="328" fill="#ededed"/><rect x="568" y="0" width="1" height="328" fill="#ededed"/><rect x="586" y="0" width="1" height="328" fill="#ededed"/><rect x="605" y="0" width="1" height="328" fill="#ededed"/><rect x="624" y="0" width="1" height="328" fill="#ededed"/><rect x="643" y="0" width="1" height="328" fill="#ededed"/><rect x="662" y="0" width="1" height="328" fill="#ededed"/><rect x="681" y="0" width="1" height="328" fill="#ededed"/><rect x="700" y="0" width="1" height="328" fill="#ededed"/><rect x="719" y="0" width="1" height="328" fill="#ededed"/><rect x="738" y="0" width="1" height="328" fill="#ededed"/><rect x="756" y="0" width="1" height="328" fill="#ededed"/><rect x="0" y="19" width="767" height="1" fill="#ededed"/><rect x="0" y="38" width="767" height="1" fill="#ededed"/><rect x="0" y="57" width="767" height="1" fill="#ededed"/><rect x="0" y="76" width="767" height="1" fill="#ededed"/><rect x="0" y="95" width="767" height="1" fill="#ededed"/><rect x="0" y="114" width="767" height="1" fill="#ededed"/><rect x="0" y="133" width="767" height="1" fill="#ededed"/><rect x="0" y="152" width="767" height="1" fill="#ededed"/><rect x="0" y="170" width="767" height="1" fill="#ededed"/><rect x="0" y="189" width="767" height="1" fill="#ededed"/><rect x="0" y="208" width="767" height="1" fill="#ededed"/><rect x="0" y="227" width="767" height="1" fill="#ededed"/><rect x="0" y="246" width="767" height="1" fill="#ededed"/><rect x="0" y="265" width="767" height="1" fill="#ededed"/><rect x="0" y="284" width="767" height="1" fill="#ededed"/><rect x="0" y="303" width="767" height="1" fill="#ededed"/><rect x="0" y="322" width="767" height="1" fill="#ededed"/></svg><div class="t" style="left:41.00px;top:145.53px;font-size:8px;font-weight:400;color:#444;font-family:'Liberation Sans',sans-serif;">1</div><div class="t" style="left:78.80px;top:145.53px;font-size:8px;font-weight:400;color:#444;font-family:'Liberation Sans',sans-serif;">2</div><div class="t" style="left:116.60px;top:145.53px;font-size:8px;font-weight:400;color:#444;font-family:'Liberation Sans',sans-serif;">3</div><div class="t" style="left:154.40px;top:145.53px;font-size:8px;font-weight:400;color:#444;font-family:'Liberation Sans',sans-serif;">4</div><div class="t" style="left:192.20px;top:145.53px;font-size:8px;font-weight:400;color:#444;font-family:'Liberation Sans',sans-serif;">5</div><div class="t" style="left:230.00px;top:145.53px;font-size:8px;font-weight:400;color:#444;font-family:'Liberation Sans',sans-serif;">6</div><div class="t" style="left:267.80px;top:145.53px;font-size:8px;font-weight:400;color:#444;font-family:'Liberation Sans',sans-serif;">7</div><div class="t" style="left:305.60px;top:145.53px;font-size:8px;font-weight:400;color:#444;font-family:'Liberation Sans',sans-serif;">8</div><div class="t" style="left:343.40px;top:145.53px;font-size:8px;font-weight:400;color:#444;font-family:'Liberation Sans',sans-serif;">9</div><div class="t" style="left:381.20px;top:145.53px;font-size:8px;font-weight:400;color:#444;font-family:'Liberation Sans',sans-serif;">10</div><div class="t" style="left:419.00px;top:145.53px;font-size:8px;font-weight:400;color:#444;font-family:'Liberation Sans',sans-serif;">11</div><div class="t" style="left:456.80px;top:145.53px;font-size:8px;font-weight:400;color:#444;font-family:'Liberation Sans',sans-serif;">12</div><div class="t" style="left:494.60px;top:145.53px;font-size:8px;font-weight:400;color:#444;font-family:'Liberation Sans',sans-serif;">13</div><div class="t" style="left:532.40px;top:145.53px;font-size:8px;font-weight:400;color:#444;font-family:'Liberation Sans',sans-serif;">14</div><div class="t" style="left:570.20px;top:145.53px;font-size:8px;font-weight:400;color:#444;font-family:'Liberation Sans',sans-serif;">15</div><div class="t" style="left:608.00px;top:145.53px;font-size:8px;font-weight:400;color:#444;font-family:'Liberation Sans',sans-serif;">16</div><div class="t" style="left:645.80px;top:145.53px;font-size:8px;font-weight:400;color:#444;font-family:'Liberation Sans',sans-serif;">17</div><div class="t" style="left:683.60px;top:145.53px;font-size:8px;font-weight:400;color:#444;font-family:'Liberation Sans',sans-serif;">18</div><div class="t" style="left:721.40px;top:145.53px;font-size:8px;font-weight:400;color:#444;font-family:'Liberation Sans',sans-serif;">19</div><div class="t" style="left:759.20px;top:145.53px;font-size:8px;font-weight:400;color:#444;font-family:'Liberation Sans',sans-serif;">20</div><div class="t" style="left:3.00px;top:183.73px;font-size:8px;font-weight:400;color:#444;font-family:'Liberation Sans',sans-serif;">1</div><div class="t" style="left:3.00px;top:221.40px;font-size:8px;font-weight:400;color:#444;font-family:'Liberation Sans',sans-serif;">2</div><div class="t" style="left:3.00px;top:259.07px;font-size:8px;font-weight:400;color:#444;font-family:'Liberation Sans',sans-serif;">3</div><div class="t" style="left:3.00px;top:296.74px;font-size:8px;font-weight:400;color:#444;font-family:'Liberation Sans',sans-serif;">4</div><div class="t" style="left:3.00px;top:334.41px;font-size:8px;font-weight:400;color:#444;font-family:'Liberation Sans',sans-serif;">5</div><div class="t" style="left:3.00px;top:372.08px;font-size:8px;font-weight:400;color:#444;font-family:'Liberation Sans',sans-serif;">6</div><div class="t" style="left:3.00px;top:409.75px;font-size:8px;font-weight:400;color:#444;font-family:'Liberation Sans',sans-serif;">7</div><div class="t" style="left:3.00px;top:447.42px;font-size:8px;font-weight:400;color:#444;font-family:'Liberation Sans',sans-serif;">8</div><div class="r" style="left:78px;top:181px;width:679px;height:17px;background:#fff"></div><svg class="r" style="left:78px;top:181px;" width="679" height="17" viewBox="0 0 679 17"><rect x="18" y="0" width="1" height="17" fill="#ededed"/><rect x="37" y="0" width="1" height="17" fill="#ededed"/><rect x="56" y="0" width="1" height="17" fill="#ededed"/><rect x="75" y="0" width="1" height="17" fill="#ededed"/><rect x="94" y="0" width="1" height="17" fill="#ededed"/><rect x="112" y="0" width="1" height="17" fill="#ededed"/><rect x="131" y="0" width="1" height="17" fill="#ededed"/><rect x="150" y="0" width="1" height="17" fill="#ededed"/><rect x="169" y="0" width="1" height="17" fill="#ededed"/><rect x="188" y="0" width="1" height="17" fill="#ededed"/><rect x="207" y="0" width="1" height="17" fill="#ededed"/><rect x="226" y="0" width="1" height="17" fill="#ededed"/><rect x="245" y="0" width="1" height="17" fill="#ededed"/><rect x="264" y="0" width="1" height="17" fill="#ededed"/><rect x="283" y="0" width="1" height="17" fill="#ededed"/><rect x="302" y="0" width="1" height="17" fill="#ededed"/><rect x="320" y="0" width="1" height="17" fill="#ededed"/><rect x="339" y="0" width="1" height="17" fill="#ededed"/><rect x="358" y="0" width="1" height="17" fill="#ededed"/><rect x="377" y="0" width="1" height="17" fill="#ededed"/><rect x="396" y="0" width="1" height="17" fill="#ededed"/><rect x="415" y="0" width="1" height="17" fill="#ededed"/><rect x="434" y="0" width="1" height="17" fill="#ededed"/><rect x="453" y="0" width="1" height="17" fill="#ededed"/><rect x="472" y="0" width="1" height="17" fill="#ededed"/><rect x="490" y="0" width="1" height="17" fill="#ededed"/><rect x="509" y="0" width="1" height="17" fill="#ededed"/><rect x="528" y="0" width="1" height="17" fill="#ededed"/><rect x="547" y="0" width="1" height="17" fill="#ededed"/><rect x="566" y="0" width="1" height="17" fill="#ededed"/><rect x="585" y="0" width="1" height="17" fill="#ededed"/><rect x="604" y="0" width="1" height="17" fill="#ededed"/><rect x="623" y="0" width="1" height="17" fill="#ededed"/><rect x="642" y="0" width="1" height="17" fill="#ededed"/><rect x="661" y="0" width="1" height="17" fill="#ededed"/></svg><div class="r" style="left:77px;top:180px;width:681px;height:19px;border:1px solid #0000ff;box-sizing:border-box"></div><div class="r" style="left:77px;top:182px;width:45px;height:17px;background:#fff"></div><div class="t" style="left:77.60px;top:184.61px;font-size:10.5px;font-weight:400;color:#000;font-family:'Liberation Sans',sans-serif;">(Datums)</div><div class="r" style="left:651px;top:182px;width:67px;height:17px;background:#fff"></div><div class="t" style="left:652.00px;top:184.57px;font-size:10.9px;font-weight:400;color:#000;font-family:'Liberation Sans',sans-serif;">Lapa (Lapa#)</div><div class="r" style="left:78px;top:200px;width:679px;height:114px;background:#fff"></div><svg class="r" style="left:78px;top:200px;" width="679" height="114" viewBox="0 0 679 114"><rect x="18" y="0" width="1" height="114" fill="#ededed"/><rect x="37" y="0" width="1" height="114" fill="#ededed"/><rect x="56" y="0" width="1" height="114" fill="#ededed"/><rect x="75" y="0" width="1" height="114" fill="#ededed"/><rect x="94" y="0" width="1" height="114" fill="#ededed"/><rect x="112" y="0" width="1" height="114" fill="#ededed"/><rect x="131" y="0" width="1" height="114" fill="#ededed"/><rect x="150" y="0" width="1" height="114" fill="#ededed"/><rect x="169" y="0" width="1" height="114" fill="#ededed"/><rect x="188" y="0" width="1" height="114" fill="#ededed"/><rect x="207" y="0" width="1" height="114" fill="#ededed"/><rect x="226" y="0" width="1" height="114" fill="#ededed"/><rect x="245" y="0" width="1" height="114" fill="#ededed"/><rect x="264" y="0" width="1" height="114" fill="#ededed"/><rect x="283" y="0" width="1" height="114" fill="#ededed"/><rect x="302" y="0" width="1" height="114" fill="#ededed"/><rect x="320" y="0" width="1" height="114" fill="#ededed"/><rect x="339" y="0" width="1" height="114" fill="#ededed"/><rect x="358" y="0" width="1" height="114" fill="#ededed"/><rect x="377" y="0" width="1" height="114" fill="#ededed"/><rect x="396" y="0" width="1" height="114" fill="#ededed"/><rect x="415" y="0" width="1" height="114" fill="#ededed"/><rect x="434" y="0" width="1" height="114" fill="#ededed"/><rect x="453" y="0" width="1" height="114" fill="#ededed"/><rect x="472" y="0" width="1" height="114" fill="#ededed"/><rect x="490" y="0" width="1" height="114" fill="#ededed"/><rect x="509" y="0" width="1" height="114" fill="#ededed"/><rect x="528" y="0" width="1" height="114" fill="#ededed"/><rect x="547" y="0" width="1" height="114" fill="#ededed"/><rect x="566" y="0" width="1" height="114" fill="#ededed"/><rect x="585" y="0" width="1" height="114" fill="#ededed"/><rect x="604" y="0" width="1" height="114" fill="#ededed"/><rect x="623" y="0" width="1" height="114" fill="#ededed"/><rect x="642" y="0" width="1" height="114" fill="#ededed"/><rect x="661" y="0" width="1" height="114" fill="#ededed"/><rect x="0" y="18" width="679" height="1" fill="#ededed"/><rect x="0" y="37" width="679" height="1" fill="#ededed"/><rect x="0" y="56" width="679" height="1" fill="#ededed"/><rect x="0" y="75" width="679" height="1" fill="#ededed"/><rect x="0" y="94" width="679" height="1" fill="#ededed"/><rect x="0" y="112" width="679" height="1" fill="#ededed"/></svg><div class="r" style="left:77px;top:199px;width:681px;height:116px;border:1px solid #0000ff;box-sizing:border-box"></div><div class="r" style="left:77px;top:200px;width:606px;height:21px;background:#fff"></div><div class="t" style="left:77.60px;top:202.72px;font-size:15.8px;font-weight:700;color:#000;font-family:'Liberation Sans',sans-serif;">Firmas nosaukums</div><div class="r" style="left:77px;top:224px;width:139px;height:17px;background:#fff"></div><div class="t" style="left:77.60px;top:226.89px;font-size:12.3px;font-weight:400;color:#000;font-family:'Liberation Sans',sans-serif;">[PVN maksātāja numurs]</div><div class="t" style="left:80.00px;top:302.73px;font-size:7.4px;font-weight:400;color:#505050;font-family:'Liberation Sans',sans-serif;letter-spacing:0.35px">Virsraksts</div><div class="t" style="left:337.60px;top:249.72px;font-size:14.5px;font-weight:700;color:#000;font-family:'Liberation Sans',sans-serif;">Nomenklatūru apgrozījums</div><div class="t" style="left:320.30px;top:271.84px;font-size:12px;font-weight:400;color:#000;font-family:'Liberation Sans',sans-serif;">No</div><div class="t" style="left:344.40px;top:271.50px;font-size:12.4px;font-weight:400;color:#000;font-family:'Liberation Sans',sans-serif;">ākuma datum</div><div class="t" style="left:432.50px;top:271.84px;font-size:12px;font-weight:400;color:#000;font-family:'Liberation Sans',sans-serif;letter-spacing:-0.2px">līdz</div><div class="t" style="left:461.20px;top:271.50px;font-size:12.4px;font-weight:400;color:#000;font-family:'Liberation Sans',sans-serif;">Beigu datums</div><div class="t" style="left:304.00px;top:295.62px;font-size:12.26px;font-weight:400;color:#000;font-family:'Liberation Sans',sans-serif;">Noliktava: Noliktava</div><div class="r" style="left:77px;top:315px;width:681px;height:19px;border:1px solid #0000ff;box-sizing:border-box"></div><div class="r" style="left:77px;top:316px;width:680px;height:17px;background:#fff"></div><div class="t" style="left:371.00px;top:317.56px;font-size:10.8px;font-weight:400;color:#000;font-family:'Liberation Sans',sans-serif;">Atlases nosacījumi</div><div class="r" style="left:77px;top:334px;width:681px;height:44px;border:1px solid #0000ff;box-sizing:border-box"></div><div class="r" style="left:78px;top:335px;width:679px;height:42px;background:#fff"></div><div class="r" style="left:77px;top:336px;width:678px;height:38px;border:1px solid #000;box-sizing:border-box"></div><div class="r" style="left:134px;top:336px;width:2px;height:1px;background:#fff"></div><div class="r" style="left:138px;top:336px;width:2px;height:1px;background:#fff"></div><div class="r" style="left:137px;top:336px;width:1px;height:38px;background:#000"></div><div class="r" style="left:274px;top:336px;width:2px;height:1px;background:#fff"></div><div class="r" style="left:278px;top:336px;width:2px;height:1px;background:#fff"></div><div class="r" style="left:277px;top:336px;width:1px;height:38px;background:#000"></div><div class="r" style="left:314px;top:336px;width:2px;height:1px;background:#fff"></div><div class="r" style="left:318px;top:336px;width:2px;height:1px;background:#fff"></div><div class="r" style="left:317px;top:336px;width:1px;height:38px;background:#000"></div><div class="r" style="left:424px;top:336px;width:2px;height:1px;background:#fff"></div><div class="r" style="left:428px;top:336px;width:2px;height:1px;background:#fff"></div><div class="r" style="left:427px;top:336px;width:1px;height:38px;background:#000"></div><div class="r" style="left:534px;top:336px;width:2px;height:1px;background:#fff"></div><div class="r" style="left:538px;top:336px;width:2px;height:1px;background:#fff"></div><div class="r" style="left:537px;top:336px;width:1px;height:38px;background:#000"></div><div class="r" style="left:644px;top:336px;width:2px;height:1px;background:#fff"></div><div class="r" style="left:648px;top:336px;width:2px;height:1px;background:#fff"></div><div class="r" style="left:647px;top:336px;width:1px;height:38px;background:#000"></div><div class="t" style="left:88.40px;top:348.63px;font-size:11.3px;font-weight:700;color:#000;font-family:'Liberation Sans',sans-serif;">Kods</div><div class="t" style="left:173.70px;top:348.29px;font-size:11.7px;font-weight:700;color:#000;font-family:'Liberation Sans',sans-serif;">Nosaukums</div><div class="t" style="left:280.20px;top:348.04px;font-size:12px;font-weight:700;color:#000;font-family:'Liberation Sans',sans-serif;">Mērv.</div><div class="t" style="left:345.50px;top:340.34px;font-size:11.65px;font-weight:700;color:#000;font-family:'Liberation Sans',sans-serif;">Sākumā</div><div class="t" style="left:323.70px;top:357.11px;font-size:10.74px;font-weight:700;color:#000;font-family:'Liberation Sans',sans-serif;">Daudz.</div><div class="t" style="left:379.30px;top:356.73px;font-size:11.18px;font-weight:700;color:#000;font-family:'Liberation Sans',sans-serif;">Summa</div><div class="t" style="left:454.30px;top:340.21px;font-size:11.8px;font-weight:700;color:#000;font-family:'Liberation Sans',sans-serif;">Saņemts</div><div class="t" style="left:434.60px;top:357.11px;font-size:10.74px;font-weight:700;color:#000;font-family:'Liberation Sans',sans-serif;">Daudz.</div><div class="t" style="left:485.30px;top:356.73px;font-size:11.18px;font-weight:700;color:#000;font-family:'Liberation Sans',sans-serif;">Summa</div><div class="t" style="left:565.00px;top:340.24px;font-size:11.76px;font-weight:700;color:#000;font-family:'Liberation Sans',sans-serif;">Izsniegts</div><div class="t" style="left:540.60px;top:357.11px;font-size:10.74px;font-weight:700;color:#000;font-family:'Liberation Sans',sans-serif;">Daudz.</div><div class="t" style="left:594.20px;top:356.73px;font-size:11.18px;font-weight:700;color:#000;font-family:'Liberation Sans',sans-serif;">Summa</div><div class="t" style="left:674.50px;top:340.31px;font-size:11.68px;font-weight:700;color:#000;font-family:'Liberation Sans',sans-serif;">Beigās</div><div class="t" style="left:651.30px;top:357.11px;font-size:10.74px;font-weight:700;color:#000;font-family:'Liberation Sans',sans-serif;">Daudz.</div><div class="t" style="left:703.00px;top:356.73px;font-size:11.18px;font-weight:700;color:#000;font-family:'Liberation Sans',sans-serif;">Summa</div><div class="r" style="left:78px;top:379px;width:679px;height:18px;background:#fff"></div><svg class="r" style="left:78px;top:379px;" width="679" height="18" viewBox="0 0 679 18"><rect x="18" y="0" width="1" height="18" fill="#ededed"/><rect x="37" y="0" width="1" height="18" fill="#ededed"/><rect x="56" y="0" width="1" height="18" fill="#ededed"/><rect x="75" y="0" width="1" height="18" fill="#ededed"/><rect x="94" y="0" width="1" height="18" fill="#ededed"/><rect x="112" y="0" width="1" height="18" fill="#ededed"/><rect x="131" y="0" width="1" height="18" fill="#ededed"/><rect x="150" y="0" width="1" height="18" fill="#ededed"/><rect x="169" y="0" width="1" height="18" fill="#ededed"/><rect x="188" y="0" width="1" height="18" fill="#ededed"/><rect x="207" y="0" width="1" height="18" fill="#ededed"/><rect x="226" y="0" width="1" height="18" fill="#ededed"/><rect x="245" y="0" width="1" height="18" fill="#ededed"/><rect x="264" y="0" width="1" height="18" fill="#ededed"/><rect x="283" y="0" width="1" height="18" fill="#ededed"/><rect x="302" y="0" width="1" height="18" fill="#ededed"/><rect x="320" y="0" width="1" height="18" fill="#ededed"/><rect x="339" y="0" width="1" height="18" fill="#ededed"/><rect x="358" y="0" width="1" height="18" fill="#ededed"/><rect x="377" y="0" width="1" height="18" fill="#ededed"/><rect x="396" y="0" width="1" height="18" fill="#ededed"/><rect x="415" y="0" width="1" height="18" fill="#ededed"/><rect x="434" y="0" width="1" height="18" fill="#ededed"/><rect x="453" y="0" width="1" height="18" fill="#ededed"/><rect x="472" y="0" width="1" height="18" fill="#ededed"/><rect x="490" y="0" width="1" height="18" fill="#ededed"/><rect x="509" y="0" width="1" height="18" fill="#ededed"/><rect x="528" y="0" width="1" height="18" fill="#ededed"/><rect x="547" y="0" width="1" height="18" fill="#ededed"/><rect x="566" y="0" width="1" height="18" fill="#ededed"/><rect x="585" y="0" width="1" height="18" fill="#ededed"/><rect x="604" y="0" width="1" height="18" fill="#ededed"/><rect x="623" y="0" width="1" height="18" fill="#ededed"/><rect x="642" y="0" width="1" height="18" fill="#ededed"/><rect x="661" y="0" width="1" height="18" fill="#ededed"/><rect x="0" y="18" width="679" height="1" fill="#ededed"/></svg><div class="r" style="left:77px;top:378px;width:681px;height:20px;border:1px solid #008000;box-sizing:border-box"></div><div class="r" style="left:78px;top:379px;width:377px;height:18px;background:#fff"></div><div class="t" style="left:80.40px;top:381.59px;font-size:11px;font-weight:700;color:#000;font-family:'Liberation Sans',sans-serif;text-decoration:underline">[Nol.Kods]</div><div class="t" style="left:168.80px;top:381.34px;font-size:11.29px;font-weight:700;color:#000;font-family:'Liberation Sans',sans-serif;text-decoration:underline">[Nol.Nosaukums]</div><div class="r" style="left:78px;top:399px;width:679px;height:16px;background:#fff"></div><svg class="r" style="left:78px;top:399px;" width="679" height="16" viewBox="0 0 679 16"><rect x="18" y="0" width="1" height="16" fill="#ededed"/><rect x="37" y="0" width="1" height="16" fill="#ededed"/><rect x="56" y="0" width="1" height="16" fill="#ededed"/><rect x="75" y="0" width="1" height="16" fill="#ededed"/><rect x="94" y="0" width="1" height="16" fill="#ededed"/><rect x="112" y="0" width="1" height="16" fill="#ededed"/><rect x="131" y="0" width="1" height="16" fill="#ededed"/><rect x="150" y="0" width="1" height="16" fill="#ededed"/><rect x="169" y="0" width="1" height="16" fill="#ededed"/><rect x="188" y="0" width="1" height="16" fill="#ededed"/><rect x="207" y="0" width="1" height="16" fill="#ededed"/><rect x="226" y="0" width="1" height="16" fill="#ededed"/><rect x="245" y="0" width="1" height="16" fill="#ededed"/><rect x="264" y="0" width="1" height="16" fill="#ededed"/><rect x="283" y="0" width="1" height="16" fill="#ededed"/><rect x="302" y="0" width="1" height="16" fill="#ededed"/><rect x="320" y="0" width="1" height="16" fill="#ededed"/><rect x="339" y="0" width="1" height="16" fill="#ededed"/><rect x="358" y="0" width="1" height="16" fill="#ededed"/><rect x="377" y="0" width="1" height="16" fill="#ededed"/><rect x="396" y="0" width="1" height="16" fill="#ededed"/><rect x="415" y="0" width="1" height="16" fill="#ededed"/><rect x="434" y="0" width="1" height="16" fill="#ededed"/><rect x="453" y="0" width="1" height="16" fill="#ededed"/><rect x="472" y="0" width="1" height="16" fill="#ededed"/><rect x="490" y="0" width="1" height="16" fill="#ededed"/><rect x="509" y="0" width="1" height="16" fill="#ededed"/><rect x="528" y="0" width="1" height="16" fill="#ededed"/><rect x="547" y="0" width="1" height="16" fill="#ededed"/><rect x="566" y="0" width="1" height="16" fill="#ededed"/><rect x="585" y="0" width="1" height="16" fill="#ededed"/><rect x="604" y="0" width="1" height="16" fill="#ededed"/><rect x="623" y="0" width="1" height="16" fill="#ededed"/><rect x="642" y="0" width="1" height="16" fill="#ededed"/><rect x="661" y="0" width="1" height="16" fill="#ededed"/></svg><div class="r" style="left:77px;top:398px;width:681px;height:18px;border:1px solid #008000;box-sizing:border-box"></div><div class="r" style="left:78px;top:399px;width:201px;height:16px;background:#fff"></div><div class="r" style="left:78px;top:399px;width:53px;height:16px;overflow:hidden"><div class="t" style="left:2.40px;top:3.19px;font-size:10.4px;font-weight:400;color:#000;font-family:'Liberation Sans',sans-serif;text-decoration:underline">[Nom.NomGr</div></div><div class="t" style="left:131.50px;top:404.23px;font-size:8px;font-weight:400;color:#008000;font-family:'Liberation Sans',sans-serif;">‹</div><div class="t" style="left:134.40px;top:402.19px;font-size:10.4px;font-weight:400;color:#000;font-family:'Liberation Sans',sans-serif;text-decoration:underline">[Nom.NomGr.Krāj.Nosaukums]</div><div class="r" style="left:77px;top:416px;width:681px;height:20px;border:1px solid #008000;box-sizing:border-box"></div><div class="r" style="left:78px;top:417px;width:679px;height:18px;background:#fff"></div><div class="t" style="left:79.80px;top:422.52px;font-size:8.6px;font-weight:400;color:#007000;font-family:'Liberation Sans',sans-serif;letter-spacing:0.1px">3. G</div><div class="r" style="left:93px;top:417px;width:123px;height:17px;background:#fff"></div><div class="t" style="left:92.60px;top:420.79px;font-size:10.4px;font-weight:400;color:#000;font-family:'Liberation Sans',sans-serif;text-decoration:underline">[Nom.NomGr.Nosaukums]</div><div class="r" style="left:77px;top:436px;width:680px;height:15px;background:#fff"></div><div class="r" style="left:77px;top:451px;width:354px;height:1px;background:#0000ff"></div><div class="r" style="left:646px;top:451px;width:112px;height:1px;background:#0000ff"></div><div class="r" style="left:757px;top:436px;width:1px;height:16px;background:#0000ff"></div><div class="r" style="left:646px;top:436px;width:2px;height:1px;background:#0000ff"></div><div class="r" style="left:287px;top:436px;width:1px;height:2px;background:#0000ff"></div><div class="r" style="left:318px;top:436px;width:2px;height:1px;background:#0000ff"></div><div class="r" style="left:133px;top:436px;width:2px;height:1px;background:#0000ff"></div><div class="r" style="left:592px;top:436px;width:2px;height:1px;background:#0000ff"></div><div class="t" style="left:77.70px;top:438.19px;font-size:10.4px;font-weight:400;color:#000;font-family:'Liberation Sans',sans-serif;">[Nom.Kods]</div><div class="t" style="left:135.70px;top:438.14px;font-size:10.46px;font-weight:400;color:#000;font-family:'Liberation Sans',sans-serif;">[Nom.Nosaukums]</div><div class="t" style="left:287.30px;top:438.19px;font-size:10.4px;font-weight:400;color:#000;font-family:'Liberation Sans',sans-serif;">Mērv.ł</div><div class="t" style="left:320.50px;top:438.19px;font-size:10.4px;font-weight:400;color:#000;font-family:'Liberation Sans',sans-serif;letter-spacing:0.25px">daudzums]</div><div class="t" style="left:373.30px;top:438.19px;font-size:10.4px;font-weight:400;color:#000;font-family:'Liberation Sans',sans-serif;letter-spacing:-0.3px">umma, EUR]</div><div class="t" style="left:434.40px;top:438.15px;font-size:10.45px;font-weight:400;color:#000;font-family:'Liberation Sans',sans-serif;">pircējiem»</div><div class="t" style="left:487.00px;top:438.19px;font-size:10.4px;font-weight:400;color:#000;font-family:'Liberation Sans',sans-serif;letter-spacing:-0.3px">opā, EUR»</div><div class="t" style="left:544.00px;top:438.11px;font-size:10.5px;font-weight:400;color:#000;font-family:'Liberation Sans',sans-serif;">orakstīts»</div><div class="t" style="left:592.00px;top:438.36px;font-size:10.2px;font-weight:400;color:#000;font-family:'Liberation Sans',sans-serif;">‹opā, EUR»</div><div class="t" style="left:647.00px;top:438.19px;font-size:10.4px;font-weight:400;color:#000;font-family:'Liberation Sans',sans-serif;letter-spacing:0.25px">daudzums]</div><div class="t" style="left:702.00px;top:438.53px;font-size:10.0px;font-weight:400;color:#000;font-family:'Liberation Sans',sans-serif;letter-spacing:-0.2px">umma, EUR]</div><div class="r" style="left:78px;top:453px;width:679px;height:27px;background:#fff"></div><svg class="r" style="left:78px;top:453px;" width="679" height="27" viewBox="0 0 679 27"><rect x="18" y="0" width="1" height="27" fill="#ededed"/><rect x="37" y="0" width="1" height="27" fill="#ededed"/><rect x="56" y="0" width="1" height="27" fill="#ededed"/><rect x="75" y="0" width="1" height="27" fill="#ededed"/><rect x="94" y="0" width="1" height="27" fill="#ededed"/><rect x="112" y="0" width="1" height="27" fill="#ededed"/><rect x="131" y="0" width="1" height="27" fill="#ededed"/><rect x="150" y="0" width="1" height="27" fill="#ededed"/><rect x="169" y="0" width="1" height="27" fill="#ededed"/><rect x="188" y="0" width="1" height="27" fill="#ededed"/><rect x="207" y="0" width="1" height="27" fill="#ededed"/><rect x="226" y="0" width="1" height="27" fill="#ededed"/><rect x="245" y="0" width="1" height="27" fill="#ededed"/><rect x="264" y="0" width="1" height="27" fill="#ededed"/><rect x="283" y="0" width="1" height="27" fill="#ededed"/><rect x="302" y="0" width="1" height="27" fill="#ededed"/><rect x="320" y="0" width="1" height="27" fill="#ededed"/><rect x="339" y="0" width="1" height="27" fill="#ededed"/><rect x="358" y="0" width="1" height="27" fill="#ededed"/><rect x="377" y="0" width="1" height="27" fill="#ededed"/><rect x="396" y="0" width="1" height="27" fill="#ededed"/><rect x="415" y="0" width="1" height="27" fill="#ededed"/><rect x="434" y="0" width="1" height="27" fill="#ededed"/><rect x="453" y="0" width="1" height="27" fill="#ededed"/><rect x="472" y="0" width="1" height="27" fill="#ededed"/><rect x="490" y="0" width="1" height="27" fill="#ededed"/><rect x="509" y="0" width="1" height="27" fill="#ededed"/><rect x="528" y="0" width="1" height="27" fill="#ededed"/><rect x="547" y="0" width="1" height="27" fill="#ededed"/><rect x="566" y="0" width="1" height="27" fill="#ededed"/><rect x="585" y="0" width="1" height="27" fill="#ededed"/><rect x="604" y="0" width="1" height="27" fill="#ededed"/><rect x="623" y="0" width="1" height="27" fill="#ededed"/><rect x="642" y="0" width="1" height="27" fill="#ededed"/><rect x="661" y="0" width="1" height="27" fill="#ededed"/><rect x="0" y="18" width="679" height="1" fill="#ededed"/></svg><div class="r" style="left:77px;top:452px;width:1px;height:18px;background:#008000"></div><div class="r" style="left:77px;top:452px;width:117px;height:1px;background:#008000"></div><div class="r" style="left:194px;top:454px;width:563px;height:1px;background:#000"></div><div class="t" style="left:79.80px;top:462.06px;font-size:7.9px;font-weight:400;color:#008000;font-family:'Liberation Sans',sans-serif;">Grupas pēdas</div><div class="t" style="left:236.50px;top:459.00px;font-size:11.1px;font-weight:700;color:#000;font-family:'Liberation Sans',sans-serif;letter-spacing:-0.15px">Kopā grupā:</div><div class="t" style="left:360.20px;top:459.52px;font-size:10.72px;font-weight:700;color:#000;font-family:'Liberation Sans',sans-serif;">umma, EUR»)</div><div class="t" style="left:463.50px;top:459.20px;font-size:11.1px;font-weight:700;color:#000;font-family:'Liberation Sans',sans-serif;">cējiem, EUR»)</div><div class="t" style="left:569.70px;top:459.39px;font-size:10.88px;font-weight:700;color:#000;font-family:'Liberation Sans',sans-serif;">›vērtēts, EUR»)</div><div class="t" style="left:685.00px;top:459.52px;font-size:10.72px;font-weight:700;color:#000;font-family:'Liberation Sans',sans-serif;">umma, EUR»)</div><div class="r" style="left:757px;top:452px;width:1px;height:18px;background:#008000"></div><div class="r" style="left:475px;top:426px;width:69px;height:34px;border:3px solid #e04040;box-sizing:border-box"></div><div class="r" style="left:482px;top:434px;width:5px;height:5px;background:#000"></div><div class="r" style="left:482px;top:449px;width:5px;height:5px;background:#000"></div><div class="r" style="left:508px;top:434px;width:5px;height:5px;background:#000"></div><div class="r" style="left:508px;top:449px;width:5px;height:5px;background:#000"></div><div class="r" style="left:534px;top:434px;width:5px;height:5px;background:#000"></div><div class="r" style="left:534px;top:449px;width:5px;height:5px;background:#000"></div><div class="r" style="left:482px;top:441px;width:5px;height:5px;background:#000"></div><div class="r" style="left:534px;top:441px;width:5px;height:5px;background:#000"></div>
</body></html>
